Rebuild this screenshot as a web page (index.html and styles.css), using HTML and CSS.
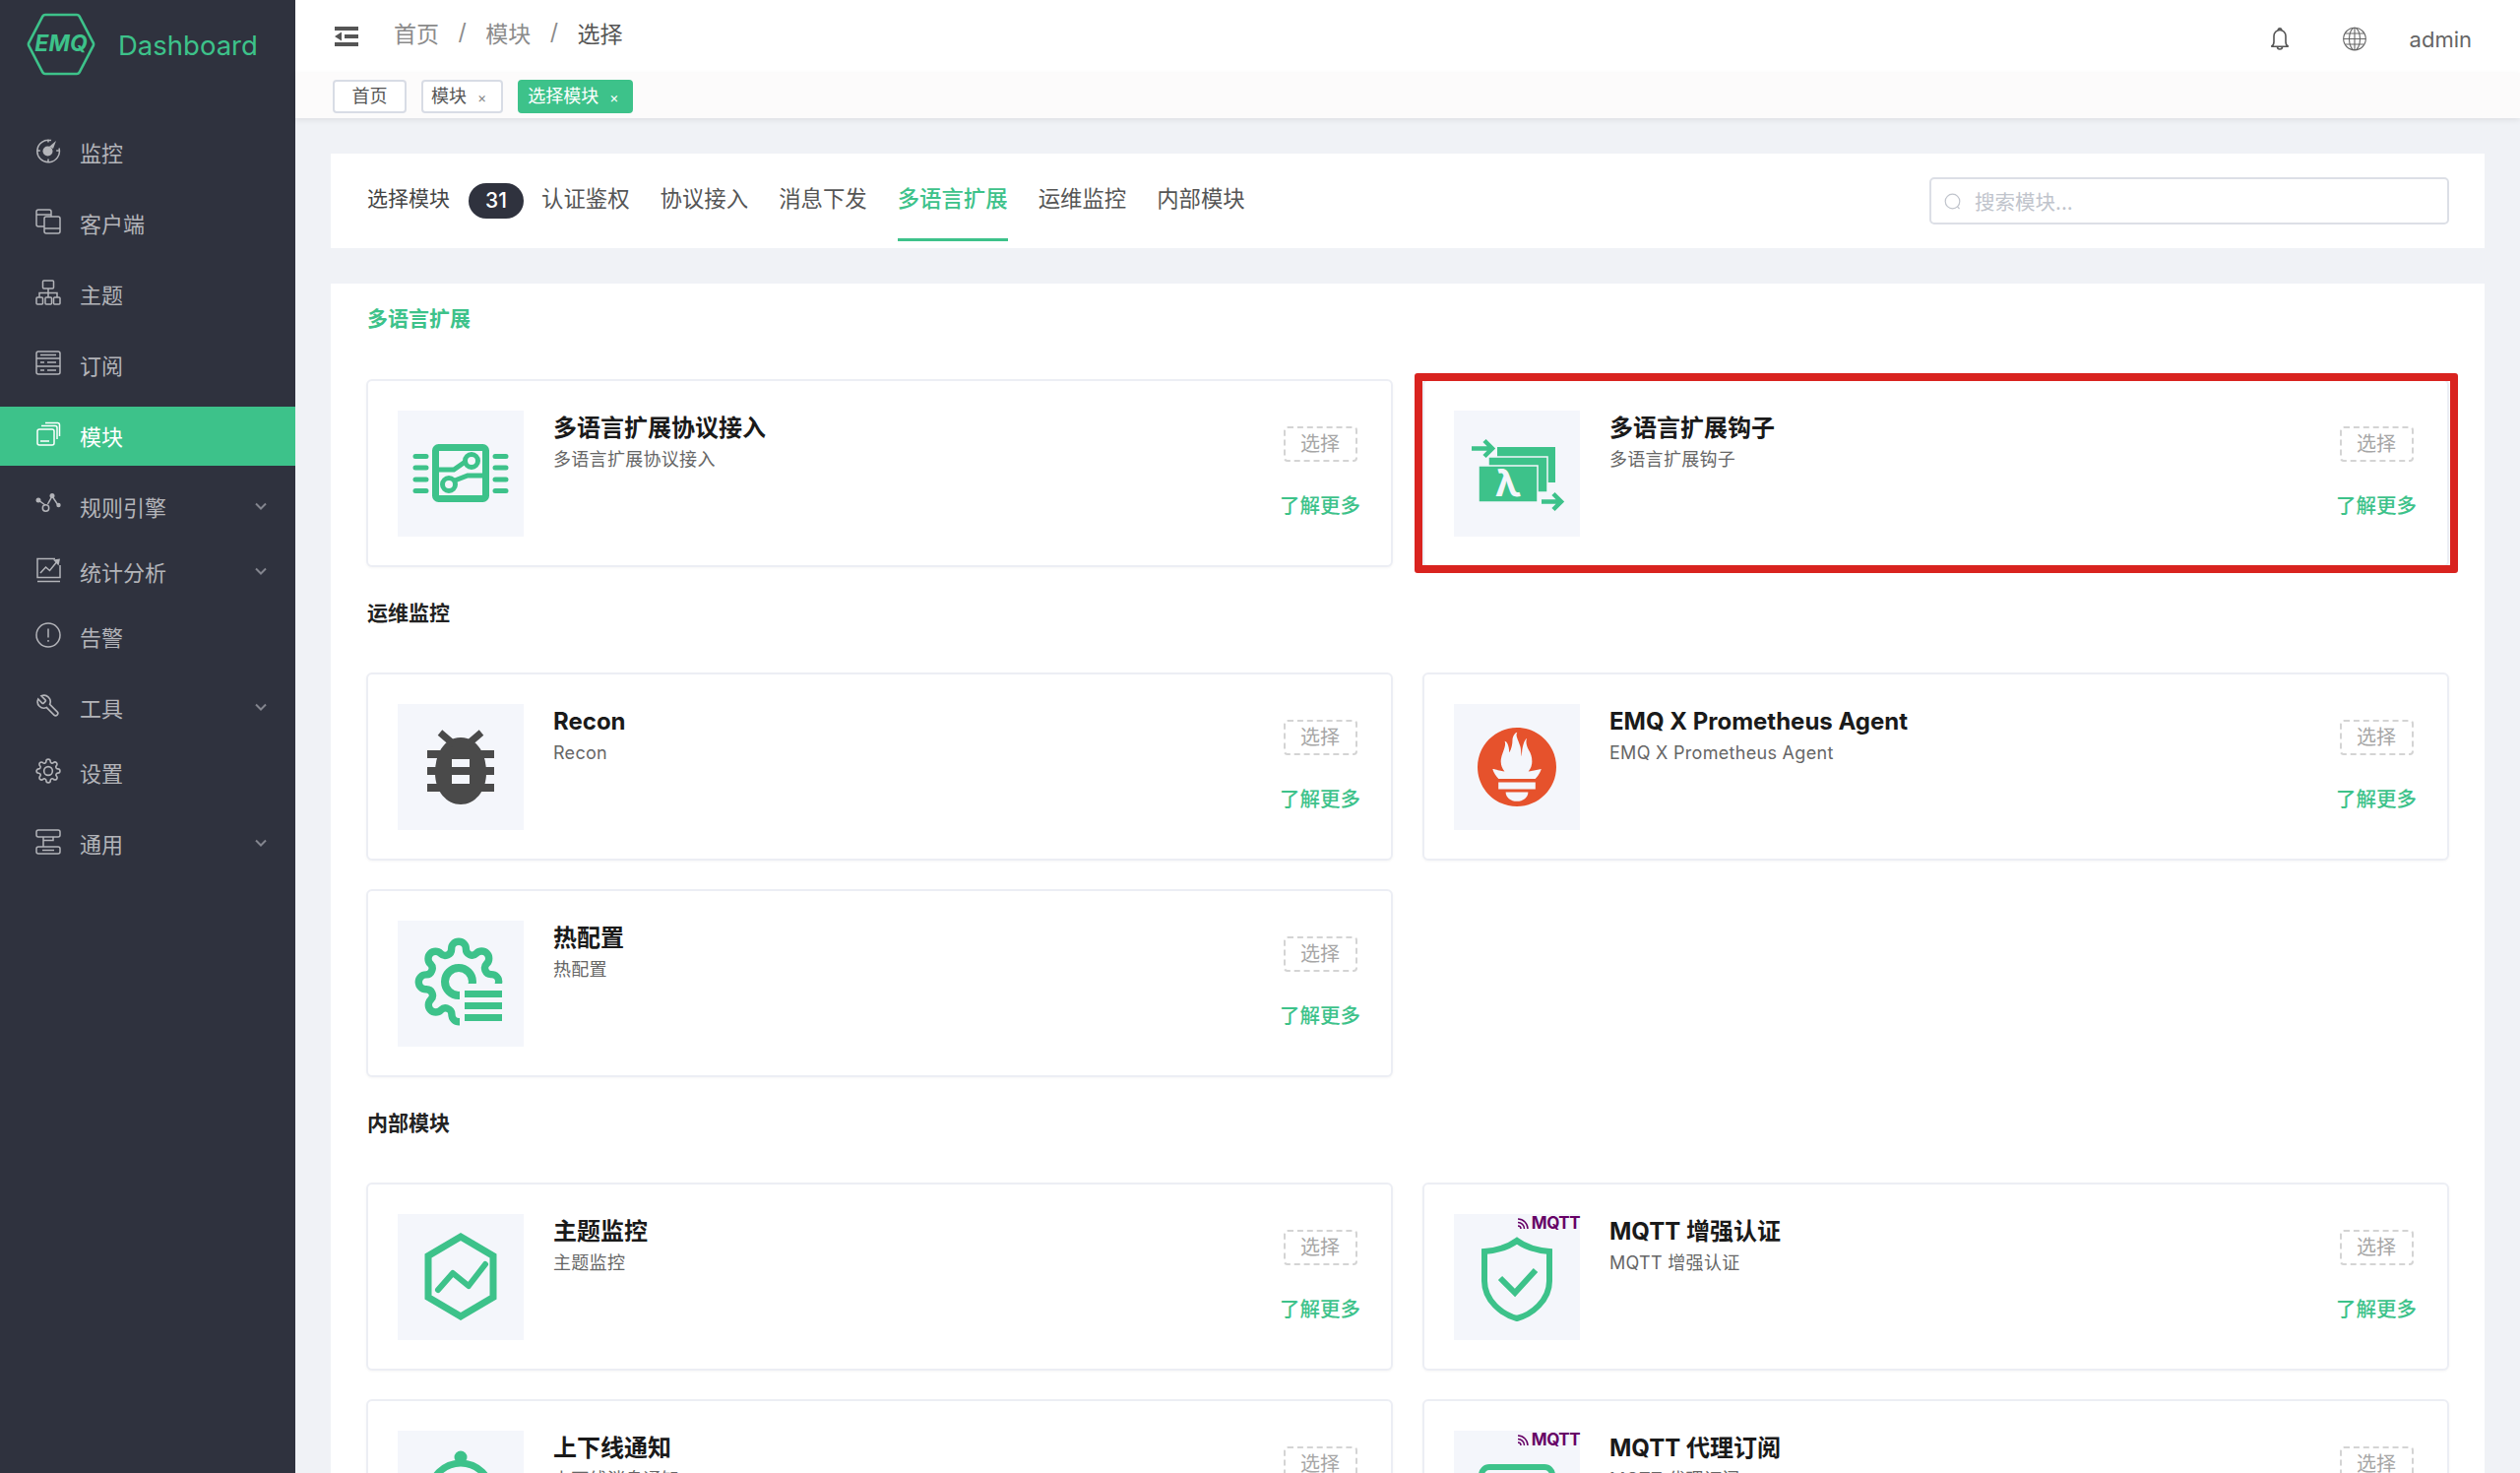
FILE: index.html
```html
<!DOCTYPE html>
<html lang="zh-CN">
<head>
    <meta charset="UTF-8">
    <title>Dashboard</title>
    <link rel="stylesheet" href="styles.css">
</head>
<body>
<div class="app">
    <aside class="sidebar">
        <div class="logo">
            <div class="logo-mark">
                <svg viewBox="0 0 70 64" width="70" height="64"><path d="M19 2h32a3 3 0 0 1 2.6 1.5L67.5 30a4 4 0 0 1 0 4L53.6 60.5A3 3 0 0 1 51 62H19a3 3 0 0 1-2.6-1.5L2.5 34a4 4 0 0 1 0-4L16.4 3.5A3 3 0 0 1 19 2z" fill="none" stroke="#3dc28a" stroke-width="2.6"/></svg>
                <span class="logo-emq">EMQ</span>
            </div>
            <span class="logo-text">Dashboard</span>
        </div>
        <nav class="menu">
            <a class="menu-item">
                <svg class="menu-icon" viewBox="0 0 26 26"><path d="M16 2.6A11.3 11.3 0 1 0 24 10.500M13 1.500v3M1.800 13h3M13 21.500v3M21.200 13h3"/><circle class="solid" cx="12.500" cy="13.500" r="5"/><path class="solid" d="M14 9l7-6-3 8z"/></svg>
                <span>监控</span>
            </a>
            <a class="menu-item">
                <svg class="menu-icon" viewBox="0 0 26 26"><path d="M9 18H3a2 2 0 0 1-2-2V3a2 2 0 0 1 2-2h11a2 2 0 0 1 2 2v5"/><path d="M1 6h15"/><rect x="9" y="8" width="16" height="17" rx="2"/><path d="M9 20h16"/></svg>
                <span>客户端</span>
            </a>
            <a class="menu-item">
                <svg class="menu-icon" viewBox="0 0 26 26"><rect x="7.500" y="1" width="11" height="8" rx="1"/><rect x="1" y="18" width="6.500" height="7" rx="1"/><rect x="10" y="18" width="6.500" height="7" rx="1"/><rect x="18.500" y="18" width="6.500" height="7" rx="1"/><path d="M13 9v9M4 18v-4.500h18V18"/></svg>
                <span>主题</span>
            </a>
            <a class="menu-item">
                <svg class="menu-icon" viewBox="0 0 26 26"><rect x="1" y="1" width="24" height="23" rx="2"/><path d="M1 8h24M1 16h24M5 12h4M12 12h9M5 20h4M12 20h9M5 4.500h16"/></svg>
                <span>订阅</span>
            </a>
            <a class="menu-item active">
                <svg class="menu-icon" viewBox="0 0 26 26"><rect x="2" y="8" width="17" height="16" rx="2"/><path d="M5 20h9M6 4.500h14a2 2 0 0 1 2 2V18M10 1.500h12a2 2 0 0 1 2.500 2V15"/></svg>
                <span>模块</span>
            </a>
            <a class="menu-item sub">
                <svg class="menu-icon" viewBox="0 0 26 26"><path d="M3 8l7 5M12.500 12L17 4l6 9"/><circle cx="10.500" cy="16" r="3.200"/><circle class="solid" cx="3" cy="8" r="2.500"/><circle class="solid" cx="17" cy="3.500" r="2.500"/><circle class="solid" cx="23.500" cy="13" r="2.200"/></svg>
                <span>规则引擎</span>
                <svg class="chevron" viewBox="0 0 12 8"><path d="M1 1.500l5 5 5-5"/></svg>
            </a>
            <a class="menu-item sub">
                <svg class="menu-icon" viewBox="0 0 26 26"><path d="M20 1.500H2v19h23V8M2 24.500h23"/><path d="M5 16l5.500-6 4 3.500L23 3"/><path class="solid" d="M18 2.500l7-1-1.500 7z"/></svg>
                <span>统计分析</span>
                <svg class="chevron" viewBox="0 0 12 8"><path d="M1 1.500l5 5 5-5"/></svg>
            </a>
            <a class="menu-item">
                <svg class="menu-icon" viewBox="0 0 26 26"><circle cx="13" cy="13" r="12"/><path d="M13 6.500v9M13 18v1.800"/></svg>
                <span>告警</span>
            </a>
            <a class="menu-item sub">
                <svg class="menu-icon" viewBox="0 0 24 24"><path transform="translate(24 0) scale(-1 1)" d="M14.700 6.300a1 1 0 0 0 0 1.400l1.600 1.600a1 1 0 0 0 1.400 0l3.770-3.770a6 6 0 0 1-7.940 7.940l-6.910 6.910a2.120 2.120 0 0 1-3-3l6.910-6.910a6 6 0 0 1 7.940-7.940l-3.760 3.760z"/></svg>
                <span>工具</span>
                <svg class="chevron" viewBox="0 0 12 8"><path d="M1 1.500l5 5 5-5"/></svg>
            </a>
            <a class="menu-item">
                <svg class="menu-icon" viewBox="0 0 24 24"><circle cx="12" cy="12" r="4"/><path d="M19.400 15a1.650 1.650 0 0 0 .33 1.820l.06.06a2 2 0 0 1 0 2.830 2 2 0 0 1-2.830 0l-.06-.06a1.650 1.650 0 0 0-1.820-.33 1.650 1.650 0 0 0-1 1.510V21a2 2 0 0 1-2 2 2 2 0 0 1-2-2v-.09A1.650 1.650 0 0 0 9 19.400a1.650 1.650 0 0 0-1.820.33l-.06.06a2 2 0 0 1-2.830 0 2 2 0 0 1 0-2.830l.06-.06a1.650 1.650 0 0 0 .33-1.820 1.650 1.650 0 0 0-1.510-1H3a2 2 0 0 1-2-2 2 2 0 0 1 2-2h.09A1.650 1.650 0 0 0 4.600 9a1.650 1.650 0 0 0-.33-1.820l-.06-.06a2 2 0 0 1 0-2.830 2 2 0 0 1 2.830 0l.06.06a1.650 1.650 0 0 0 1.820.33H9a1.650 1.650 0 0 0 1-1.510V3a2 2 0 0 1 2-2 2 2 0 0 1 2 2v.09a1.650 1.650 0 0 0 1 1.510 1.650 1.650 0 0 0 1.820-.33l.06-.06a2 2 0 0 1 2.830 0 2 2 0 0 1 0 2.830l-.06.06a1.650 1.650 0 0 0-.33 1.820V9a1.650 1.650 0 0 0 1.510 1H21a2 2 0 0 1 2 2 2 2 0 0 1-2 2h-.09a1.650 1.650 0 0 0-1.510 1z"/></svg>
                <span>设置</span>
            </a>
            <a class="menu-item sub">
                <svg class="menu-icon" viewBox="0 0 26 26"><rect x="1" y="1" width="24" height="7" rx="2"/><rect x="1" y="18" width="24" height="7" rx="2"/><path d="M8 8v10M18 8v3.500H8M7 21.500h12"/></svg>
                <span>通用</span>
                <svg class="chevron" viewBox="0 0 12 8"><path d="M1 1.500l5 5 5-5"/></svg>
            </a>
        </nav>
    </aside>

    <div class="main">
        <header class="topbar">
            <svg class="hamburger" viewBox="0 0 24 20"><path d="M0 0h24v4H0zM0 16h24v4H0zM10 8h14v4H10zM7 5.500v9L0 10z"/></svg>
            <div class="breadcrumb">
                <span>首页</span><i>/</i><span>模块</span><i>/</i><span class="current">选择</span>
            </div>
            <div class="topbar-right">
                <svg class="bell" viewBox="0 0 20 25"><path d="M10 3.500a6 6 0 0 0-6 6v6c0 2.500-1 4-2.700 4.800h17.400C17 19.500 16 18 16 15.500v-6a6 6 0 0 0-6-6zM8.300 3.500a1.700 1.700 0 0 1 3.400 0M7.500 20.500a2.500 2.500 0 0 0 5 0"/></svg>
                <svg class="globe" viewBox="0 0 24 24"><circle cx="12" cy="12" r="11.300"/><ellipse cx="12" cy="12" rx="5.500" ry="11.300"/><path d="M12 .7v22.600M.7 12h22.600M2.500 6.500h19M2.500 17.500h19"/></svg>
                <span class="user">admin</span>
            </div>
        </header>
        <div class="tags">
            <span class="tag">首页</span>
            <span class="tag">模块<b>×</b></span>
            <span class="tag on">选择模块<b>×</b></span>
        </div>

        <div class="content">
            <div class="tabs-panel">
                <span class="tab">选择模块</span>
                <span class="badge">31</span>
                <span class="tab">认证鉴权</span>
                <span class="tab">协议接入</span>
                <span class="tab">消息下发</span>
                <span class="tab selected">多语言扩展</span>
                <span class="tab">运维监控</span>
                <span class="tab">内部模块</span>
                <div class="search">
                    <svg viewBox="0 0 18 18"><circle cx="8.500" cy="8.500" r="7.300"/><path d="M13.500 13.800l2 2.200"/></svg>
                    <span>搜索模块...</span>
                </div>
            </div>

            <div class="modules-panel">
                <h3 class="group-title green">多语言扩展</h3>
                <div class="card-grid">
                    <div class="card">
                        <div class="card-img">
                            <svg viewBox="0 0 128 128">
                                <rect x="38.500" y="37.500" width="51" height="52" rx="3" fill="none" stroke="#3dc28a" stroke-width="7"/>
                                <g fill="none" stroke="#3dc28a" stroke-width="5" stroke-linecap="round">
                                    <path d="M18 46.500h11M18 58h11M18 70h11M18 81.500h11M99 46.500h11M99 58h11M99 70h11M99 81.500h11"/>
                                    <path d="M38 60h19l13-9" stroke-linecap="butt"/>
                                    <path d="M58 71l13-5h19" stroke-linecap="butt"/>
                                    <circle cx="75" cy="51" r="6.500"/>
                                    <circle cx="52" cy="75" r="6.500"/>
                                </g>
                            </svg>
                        </div>
                        <div class="card-text">
                            <div class="card-title">多语言扩展协议接入</div>
                            <div class="card-desc">多语言扩展协议接入</div>
                        </div>
                        <div class="card-actions">
                            <span class="pick">选择</span>
                            <a class="more">了解更多</a>
                        </div>
                    </div>
                    <div class="card marked">
                        <div class="card-img">
                            <svg viewBox="0 0 128 128">
                                <rect x="44" y="37" width="59" height="36" fill="#3dc28a"/>
                                <rect x="35" y="47" width="60" height="36" fill="#3dc28a" stroke="#f4f6fb" stroke-width="1.500"/>
                                <rect x="25" y="56" width="60" height="37" fill="#3dc28a" stroke="#f4f6fb" stroke-width="1.500"/>
                                <g fill="none" stroke="#3dc28a" stroke-width="4.500">
                                    <path d="M18 38.500h19M31 30.500l8 8-8 8"/>
                                    <path d="M89 92.500h19M101 84.500l8 8-8 8"/>
                                </g>
                                <text class="lambda" x="55" y="87">λ</text>
                            </svg>
                        </div>
                        <div class="card-text">
                            <div class="card-title">多语言扩展钩子</div>
                            <div class="card-desc">多语言扩展钩子</div>
                        </div>
                        <div class="card-actions">
                            <span class="pick">选择</span>
                            <a class="more">了解更多</a>
                        </div>
                    </div>
                </div>

                <h3 class="group-title">运维监控</h3>
                <div class="card-grid">
                    <div class="card">
                        <div class="card-img">
                            <svg viewBox="0 0 128 128">
                                <g fill="#4a4a4a">
                                    <path d="M64 34c15 0 26 14 26 36 0 19-12 32-26 32S38 89 38 70c0-22 11-36 26-36z"/>
                                    <path d="M30 47h68v8H30zM30 64h68v8H30zM30 81h68v8H30z"/>
                                </g>
                                <path d="M43 29l14 12M85 29L71 41" fill="none" stroke="#4a4a4a" stroke-width="7"/>
                                <path d="M55 56h18v8H55zM55 72h18v9H55z" fill="#f4f6fb"/>
                            </svg>
                        </div>
                        <div class="card-text">
                            <div class="card-title">Recon</div>
                            <div class="card-desc">Recon</div>
                        </div>
                        <div class="card-actions">
                            <span class="pick">选择</span>
                            <a class="more">了解更多</a>
                        </div>
                    </div>
                    <div class="card">
                        <div class="card-img">
                            <svg viewBox="-7.200 -7.200 38.400 38.400">
                                <path fill="#e6522c" d="M12 0C5.373 0 0 5.372 0 12c0 6.627 5.373 12 12 12s12-5.373 12-12c0-6.628-5.373-12-12-12zm0 22.460c-1.885 0-3.414-1.260-3.414-2.814h6.828c0 1.553-1.528 2.813-3.414 2.813zm5.640-3.745H6.360v-2.046h11.280v2.046zm-.04-3.098H6.391c-.037-.043-.075-.086-.111-.13-1.155-1.401-1.427-2.133-1.690-2.879-.005-.025 1.400.287 2.395.511 0 0 .513.119 1.262.255-.720-.843-1.147-1.915-1.147-3.010 0-2.406 1.845-4.508 1.180-6.207.648.053 1.340 1.367 1.387 3.422.689-.951.977-2.690.977-3.755 0-1.103.727-2.385 1.454-2.429-.648 1.069.168 1.984.894 4.256.272.854.237 2.290.447 3.201.07-1.892.395-4.652 1.595-5.605-.529 1.200.079 2.702.494 3.424.671 1.164 1.078 2.047 1.078 3.716a4.642 4.642 0 0 1-1.110 2.996c.792-.149 1.340-.283 1.340-.283l2.573-.502s-.374 1.538-1.810 3.019z"/>
                            </svg>
                        </div>
                        <div class="card-text">
                            <div class="card-title">EMQ X Prometheus Agent</div>
                            <div class="card-desc">EMQ X Prometheus Agent</div>
                        </div>
                        <div class="card-actions">
                            <span class="pick">选择</span>
                            <a class="more">了解更多</a>
                        </div>
                    </div>
                    <div class="card">
                        <div class="card-img">
                            <svg viewBox="0 0 128 128">
                                <g transform="translate(17.600 17.600) scale(3.700)">
                                    <path fill="none" stroke="#3dc28a" stroke-width="2" d="M19.400 15a1.650 1.650 0 0 0 .33 1.820l.06.06a2 2 0 0 1 0 2.830 2 2 0 0 1-2.830 0l-.06-.06a1.650 1.650 0 0 0-1.820-.33 1.650 1.650 0 0 0-1 1.510V21a2 2 0 0 1-2 2 2 2 0 0 1-2-2v-.09A1.650 1.650 0 0 0 9 19.400a1.650 1.650 0 0 0-1.820.33l-.06.06a2 2 0 0 1-2.830 0 2 2 0 0 1 0-2.830l.06-.06a1.650 1.650 0 0 0 .33-1.820 1.650 1.650 0 0 0-1.510-1H3a2 2 0 0 1-2-2 2 2 0 0 1 2-2h.09A1.650 1.650 0 0 0 4.600 9a1.650 1.650 0 0 0-.33-1.820l-.06-.06a2 2 0 0 1 0-2.830 2 2 0 0 1 2.830 0l.06.06a1.650 1.650 0 0 0 1.820.33H9a1.650 1.650 0 0 0 1-1.510V3a2 2 0 0 1 2-2 2 2 0 0 1 2 2v.09a1.650 1.650 0 0 0 1 1.510 1.650 1.650 0 0 0 1.820-.33l.06-.06a2 2 0 0 1 2.830 0 2 2 0 0 1 0 2.830l-.06.06a1.650 1.650 0 0 0-.33 1.820V9a1.650 1.650 0 0 0 1.510 1H21a2 2 0 0 1 2 2 2 2 0 0 1-2 2h-.09a1.650 1.650 0 0 0-1.510 1z"/>
                                </g>
                                <circle cx="62" cy="62" r="14" fill="none" stroke="#3dc28a" stroke-width="8"/>
                                <rect x="63" y="64" width="50" height="46" fill="#f4f6fb"/>
                                <path d="M68 71h38v7H68zM68 83h38v7H68zM68 95h38v7H68z" fill="#3dc28a"/>
                            </svg>
                        </div>
                        <div class="card-text">
                            <div class="card-title">热配置</div>
                            <div class="card-desc">热配置</div>
                        </div>
                        <div class="card-actions">
                            <span class="pick">选择</span>
                            <a class="more">了解更多</a>
                        </div>
                    </div>
                </div>

                <h3 class="group-title">内部模块</h3>
                <div class="card-grid">
                    <div class="card">
                        <div class="card-img">
                            <svg viewBox="0 0 128 128">
                                <path d="M64 23l33 19.500v42L64 104 31 84.500v-42z" fill="none" stroke="#3dc28a" stroke-width="7"/>
                                <path d="M41 77l15-17 16 13 17-22" fill="none" stroke="#3dc28a" stroke-width="6" stroke-linecap="round" stroke-linejoin="round"/>
                            </svg>
                        </div>
                        <div class="card-text">
                            <div class="card-title">主题监控</div>
                            <div class="card-desc">主题监控</div>
                        </div>
                        <div class="card-actions">
                            <span class="pick">选择</span>
                            <a class="more">了解更多</a>
                        </div>
                    </div>
                    <div class="card">
                        <div class="card-img">
                            <div class="mqtt-mark">
                                <svg viewBox="0 0 14 14"><path d="M1 3a10 10 0 0 1 10 10M1 6.500a6.500 6.500 0 0 1 6.500 6.500M1 10a3 3 0 0 1 3 3" fill="none" stroke="#660066" stroke-width="1.500"/></svg>
                                <span>MQTT</span>
                            </div>
                            <svg viewBox="0 0 128 128">
                                <path d="M64 27C56 33 44 37 31 38v30c0 20 18 34 33 38 15-4 33-18 33-38V38C84 37 72 33 64 27z" fill="none" stroke="#3dc28a" stroke-width="6"/>
                                <path d="M47 65l15 15 21-23" fill="none" stroke="#3dc28a" stroke-width="6"/>
                            </svg>
                        </div>
                        <div class="card-text">
                            <div class="card-title">MQTT 增强认证</div>
                            <div class="card-desc">MQTT 增强认证</div>
                        </div>
                        <div class="card-actions">
                            <span class="pick">选择</span>
                            <a class="more">了解更多</a>
                        </div>
                    </div>
                    <div class="card">
                        <div class="card-img">
                            <svg viewBox="0 0 128 128">
                                <circle cx="64" cy="27" r="6.500" fill="#3dc28a"/>
                                <circle cx="64" cy="64" r="31" fill="none" stroke="#3dc28a" stroke-width="7"/>
                            </svg>
                        </div>
                        <div class="card-text">
                            <div class="card-title">上下线通知</div>
                            <div class="card-desc">上下线消息通知</div>
                        </div>
                        <div class="card-actions">
                            <span class="pick">选择</span>
                            <a class="more">了解更多</a>
                        </div>
                    </div>
                    <div class="card">
                        <div class="card-img">
                            <div class="mqtt-mark">
                                <svg viewBox="0 0 14 14"><path d="M1 3a10 10 0 0 1 10 10M1 6.500a6.500 6.500 0 0 1 6.500 6.500M1 10a3 3 0 0 1 3 3" fill="none" stroke="#660066" stroke-width="1.500"/></svg>
                                <span>MQTT</span>
                            </div>
                            <svg viewBox="0 0 128 128">
                                <rect x="28" y="37" width="72" height="60" rx="8" fill="none" stroke="#3dc28a" stroke-width="6"/>
                            </svg>
                        </div>
                        <div class="card-text">
                            <div class="card-title">MQTT 代理订阅</div>
                            <div class="card-desc">MQTT 代理订阅</div>
                        </div>
                        <div class="card-actions">
                            <span class="pick">选择</span>
                            <a class="more">了解更多</a>
                        </div>
                    </div>
                </div>
            </div>
        </div>
    </div>
</div>
</body>
</html>
```

FILE: styles.css
```css
* {
    box-sizing: border-box;
}
html, body {
    margin: 0;
    height: 100%;
    overflow: hidden;
}
body {
    font-family: Inter, "Noto Sans CJK SC", sans-serif;
    background-color: #f0f2f6;
    color: #333;
}
.app {
    display: flex;
    height: 1496px;
    overflow: hidden;
}

/* sidebar */
.sidebar {
    width: 300px;
    flex-shrink: 0;
    background-color: #2f323e;
}
.logo {
    height: 125px;
    padding: 13px 0 0 27px;
    display: flex;
    align-items: flex-start;
    gap: 23px;
}
.logo-mark {
    position: relative;
    width: 70px;
    height: 64px;
}
.logo-emq {
    position: absolute;
    top: 0;
    left: 0;
    width: 70px;
    line-height: 62px;
    text-align: center;
    font-size: 23px;
    font-weight: 700;
    font-style: italic;
    color: #3dc28a;
}
.logo-text {
    font-size: 27.5px;
    line-height: 66px;
    color: #3dc28a;
}
.menu-item {
    display: flex;
    align-items: center;
    height: 60px;
    margin-bottom: 12px;
    padding: 0 29px 0 36px;
    font-size: 22px;
    color: #b3b4b9;
}
.menu-item span {
    margin-top: -3px;
}
.menu-item.sub {
    margin-bottom: 6px;
}
.menu-item.active {
    background-color: #3dc28a;
    color: #fff;
}
.menu-icon {
    width: 26px;
    height: 26px;
    margin: -4px 19px 0 0;
    fill: none;
    stroke: currentColor;
    stroke-width: 1.5;
}
.menu-icon .solid {
    fill: currentColor;
    stroke: none;
}
.chevron {
    width: 12px;
    height: 8px;
    margin-left: auto;
    margin-top: -2px;
    fill: none;
    stroke: #83858e;
    stroke-width: 2;
}

/* top bar */
.main {
    flex: 1;
    min-width: 0;
}
.topbar {
    height: 74px;
    background-color: #fff;
    display: flex;
    align-items: center;
    padding: 0 49px 4px 40px;
}
.hamburger {
    width: 24px;
    height: 20px;
    margin-top: 4px;
    fill: #555;
}
.breadcrumb {
    margin-left: 36px;
    margin-top: -4px;
    font-size: 23px;
    color: #8b8b8b;
    display: flex;
    align-items: center;
}
.breadcrumb i {
    font-style: normal;
    margin: 0 19.500px;
}
.breadcrumb .current {
    color: #555;
}
.topbar-right {
    margin-left: auto;
    display: flex;
    align-items: center;
    color: #666;
}
.bell {
    width: 20px;
    height: 25px;
    margin-top: 8px;
    fill: none;
    stroke: #555;
    stroke-width: 1.6;
}
.globe {
    width: 24px;
    height: 25px;
    margin: 8px 0 0 54px;
    fill: none;
    stroke: #666;
    stroke-width: 1.1;
}
.user {
    margin: 10px 0 0 44px;
    font-size: 22px;
}

/* tags */
.tags {
    height: 46px;
    background-color: #fcfbfb;
    box-shadow: 0 2px 6px rgba(0, 0, 0, 0.08);
    display: flex;
    align-items: flex-start;
    gap: 15px;
    padding: 7px 0 0 38px;
    position: relative;
}
.tag {
    height: 34px;
    line-height: 30px;
    padding: 0 17.500px;
    font-size: 18px;
    border: 2px solid #d8dce5;
    border-radius: 4px;
    background-color: #fff;
    color: #555;
}
.tag b {
    font-weight: 400;
    font-size: 14px;
    color: #888;
    margin-left: 11px;
}
.tag:nth-child(2) {
    padding: 0 15px 0 8px;
}
.tag.on {
    padding: 0 12px 0 8px;
    background-color: #3dc28a;
    border-color: #3dc28a;
    color: #fff;
}
.tag.on b {
    color: #fff;
}

/* tabs panel */
.content {
    padding: 36px 36px 0;
}
.tabs-panel {
    height: 96px;
    background-color: #fff;
    display: flex;
    padding: 0 36px 0 37px;
}
.tab {
    height: 89px;
    padding-top: 30px;
    line-height: 32px;
    font-size: 22.400px;
    color: #555;
    margin-right: 31px;
}
.tab:first-child {
    font-size: 21px;
    margin-right: 19px;
    color: #444;
}
.tab.selected {
    color: #3dc28a;
    font-weight: 500;
    border-bottom: 3px solid #3dc28a;
}
.badge {
    align-self: center;
    width: 56px;
    height: 36px;
    line-height: 36px;
    margin-right: 18px;
    border-radius: 18px;
    background-color: #2f323e;
    color: #fff;
    font-size: 21px;
    font-weight: 500;
    text-align: center;
}
.search {
    align-self: center;
    margin-left: auto;
    width: 528px;
    height: 48px;
    border: 2px solid #dcdfe6;
    border-radius: 5px;
    display: flex;
    align-items: center;
    padding-left: 13px;
    font-size: 20.500px;
    color: #c0c4cc;
}
.search svg {
    width: 18px;
    height: 18px;
    margin: 2px 13px 0 0;
    fill: none;
    stroke: #c0c4cc;
    stroke-width: 1.2;
}

/* module cards */
.modules-panel {
    margin-top: 36px;
    background-color: #fff;
    padding: 21px 36px 0;
}
.group-title {
    margin: 0 0 45px 1px;
    font-size: 21px;
    line-height: 30px;
    font-weight: 600;
    color: #222;
}
.group-title.green {
    margin-bottom: 46px;
    color: #3dc28a;
}
.card-grid {
    display: grid;
    grid-template-columns: 1fr 1fr;
    column-gap: 30px;
    row-gap: 29px;
    margin-bottom: 32px;
}
.card {
    position: relative;
    height: 191px;
    display: flex;
    padding: 30px 31px 0 30px;
    border: 2px solid #eceef4;
    border-radius: 6px;
    background-color: #fff;
    box-shadow: 0 1px 3px rgba(0, 0, 0, 0.04);
}
.card.marked::after {
    content: "";
    position: absolute;
    top: -8px;
    left: -10px;
    right: -11px;
    bottom: -8px;
    border: 8px solid #d9231f;
    border-radius: 3px;
}
.card-img {
    position: relative;
    width: 128px;
    height: 128px;
    flex-shrink: 0;
    background-color: #f4f6fb;
}
.card-img > svg {
    display: block;
    width: 128px;
    height: 128px;
}
.card-text {
    flex: 1;
    margin: 1px 0 0 30px;
}
.card-title {
    font-size: 24px;
    line-height: 34px;
    font-weight: 700;
    color: #1a1a1a;
}
.card-desc {
    font-size: 18px;
    line-height: 30px;
    letter-spacing: 0.3px;
    color: #666;
}
.card-actions {
    display: flex;
    flex-direction: column;
    align-items: center;
    padding-top: 16px;
}
.pick {
    width: 75px;
    height: 36px;
    line-height: 32px;
    text-align: center;
    border: 2px dashed #d4d4d4;
    border-radius: 4px;
    font-size: 20px;
    color: #a6a6a6;
}
.more {
    margin-top: 30px;
    font-size: 20.500px;
    line-height: 30px;
    font-weight: 500;
    color: #3dc28a;
}
.lambda {
    font-size: 38px;
    font-weight: 700;
    text-anchor: middle;
    fill: #f4f6fb;
}
.mqtt-mark {
    position: absolute;
    top: 0;
    right: 0;
    display: flex;
    align-items: center;
    gap: 1px;
    height: 18px;
    font-size: 17px;
    font-weight: 700;
    letter-spacing: -0.5px;
    color: #660066;
}
.mqtt-mark svg {
    width: 14px;
    height: 14px;
}
```
